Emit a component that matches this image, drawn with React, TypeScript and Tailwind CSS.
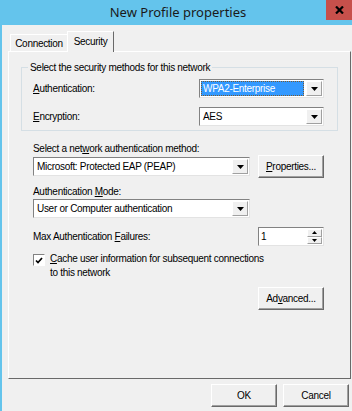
import React from 'react'

const font = { fontFamily: '"Liberation Sans", Arial, sans-serif' }

function U({ children }: { children: React.ReactNode }) {
  return <span className="underline underline-offset-1">{children}</span>
}

function Combo({ value, width, selected }: { value: string; width: string; selected?: boolean }) {
  return (
    <div className={`flex h-[19px] items-stretch border border-t-[#828282] border-l-[#828282] border-b-[#e3e3e3] border-r-[#e3e3e3] bg-white ${width}`}>
      <div className="flex flex-1 items-center p-[1px]">
        {selected ? (
          <div className="flex h-full w-full items-center border border-dotted border-[#7a5a30] bg-[#3399ff] pl-[1px] text-white">
            {value}
          </div>
        ) : (
          <div className="pl-[2px]">{value}</div>
        )}
      </div>
      <div className="m-[1px] flex w-[16px] items-center justify-center border border-t-white border-l-white border-b-[#a0a0a0] border-r-[#a0a0a0] bg-[#f0f0f0]">
        <svg width="7" height="4" viewBox="0 0 7 4">
          <path d="M0 0h7L3.5 4z" fill="#000" />
        </svg>
      </div>
    </div>
  )
}

function Btn({ children, className = '' }: { children: React.ReactNode; className?: string }) {
  return (
    <div className={`flex items-center justify-center border border-t-white border-l-white border-b-[#696969] border-r-[#696969] bg-[#f0f0f0] shadow-[inset_-1px_-1px_0_#a0a0a0] ${className}`}>
      {children}
    </div>
  )
}

export default function App() {
  return (
    <div className="flex h-[411px] w-[352px] flex-col overflow-hidden bg-[#f0f0f0] text-[10px] leading-[13px] tracking-[-0.3px] text-black" style={font}>
      <div className="relative flex h-[25px] shrink-0 items-center justify-center bg-[#64c4ec]">
        <span className="ml-[4px] text-[13px] tracking-normal text-[#1a1a1a]" style={{ fontFamily: '"Noto Sans", "Open Sans", sans-serif' }}>
          New Profile properties
        </span>
        <div className="absolute right-0 top-0 flex h-[20px] w-[26px] items-center justify-center bg-[#c7504b]">
          <svg width="9" height="8" viewBox="0 0 9 8">
            <path d="M1 0.5L8 7.5M8 0.5L1 7.5" stroke="#000" strokeWidth="2.2" />
          </svg>
        </div>
      </div>
      <div className="flex flex-1 border-l-[2px] border-[#64c4ec]">
        <div className="flex flex-1 flex-col pl-[6px] pt-[6px]">
          {/* tabs */}
          <div className="flex h-[20px] items-end">
            <div className="ml-[2px] flex h-[17px] w-[57px] items-center justify-center border-l border-t border-white">Connection</div>
            <div className="relative z-10 -mb-[1px] flex h-[21px] w-[47px] items-center justify-center border-l border-t border-r border-l-white border-t-white border-r-[#696969] bg-[#f0f0f0] pb-[2px]">
              Security
            </div>
          </div>
          <div className="flex h-[328px] w-[343px] flex-col border border-t-white border-l-white border-r-[#696969] border-b-[#696969] pl-[12px] pr-[10px] pt-[15px]">
            {/* group */}
            <div className="relative h-[64px] w-[317px] border border-[#d5dfe5]">
              <div className="absolute -top-[7px] left-[6px] bg-[#f0f0f0] px-[2px]">Select the security methods for this network</div>
              <div className="flex flex-col gap-[9px] pl-[11px] pt-[11px]">
                <div className="flex items-center justify-between pr-[13px]">
                  <span>
                    <U>A</U>uthentication:
                  </span>
                  <Combo value="WPA2-Enterprise" width="w-[125px]" selected />
                </div>
                <div className="flex items-center justify-between pr-[13px]">
                  <span>
                    <U>E</U>ncryption:
                  </span>
                  <Combo value="AES" width="w-[125px]" />
                </div>
              </div>
            </div>
            <div className="pl-[12px] pr-[3px] pt-[11px]">
              <div>
                Select a net<U>w</U>ork authentication method:
              </div>
              <div className="mt-[0px] flex items-center gap-[8px]">
                <Combo value="Microsoft: Protected EAP (PEAP)" width="w-[217px]" />
                <Btn className="h-[23px] w-[66px]">
                  <span>
                    <U>P</U>roperties...
                  </span>
                </Btn>
              </div>
              <div className="mt-[7px]">
                Authentication <U>M</U>ode:
              </div>
              <div className="mt-[1px]">
                <Combo value="User or Computer authentication" width="w-[217px]" />
              </div>
              <div className="mt-[9px] flex w-[291px] items-center justify-between">
                <span>
                  Max Authentication <U>F</U>ailures:
                </span>
                <div className="flex h-[19px] w-[66px] border border-t-[#828282] border-l-[#828282] border-b-[#e3e3e3] border-r-[#e3e3e3] bg-white">
                  <div className="flex flex-1 items-center pl-[2px]">1</div>
                  <div className="m-[1px] flex w-[15px] flex-col">
                    <div className="flex flex-1 items-center justify-center border border-t-white border-l-white border-b-[#a0a0a0] border-r-[#a0a0a0] bg-[#f0f0f0]">
                      <svg width="5" height="3" viewBox="0 0 5 3">
                        <path d="M0 3h5L2.5 0z" fill="#000" />
                      </svg>
                    </div>
                    <div className="flex flex-1 items-center justify-center border border-t-white border-l-white border-b-[#a0a0a0] border-r-[#a0a0a0] bg-[#f0f0f0]">
                      <svg width="5" height="3" viewBox="0 0 5 3">
                        <path d="M0 0h5L2.5 3z" fill="#000" />
                      </svg>
                    </div>
                  </div>
                </div>
              </div>
              <div className="mt-[6px] flex items-start gap-[5px]">
                <div className="mt-[2px] flex h-[12px] w-[12px] items-center justify-center border border-t-[#828282] border-l-[#828282] border-b-white border-r-white bg-white">
                  <svg width="8" height="7" viewBox="0 0 8 7">
                    <path d="M1 3.5l2 2L7 1" stroke="#000" strokeWidth="1.7" fill="none" />
                  </svg>
                </div>
                <div className="leading-[14px]">
                  <U>C</U>ache user information for subsequent connections
                  <br />
                  to this network
                </div>
              </div>
              <div className="mt-[7px] flex w-[291px] justify-end">
                <Btn className="h-[23px] w-[66px]">
                  <span>
                    Ad<U>v</U>anced...
                  </span>
                </Btn>
              </div>
            </div>
          </div>
          <div className="mt-[5px] flex justify-end gap-[6px] pr-[3px]">
            <Btn className="h-[23px] w-[66px]">OK</Btn>
            <Btn className="h-[23px] w-[66px]">Cancel</Btn>
          </div>
        </div>
      </div>
    </div>
  )
}
